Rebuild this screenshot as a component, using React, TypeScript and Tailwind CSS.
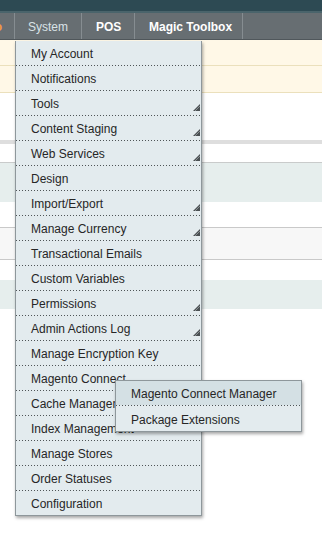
import React from "react"

const items = [
  { label: "My Account" },
  { label: "Notifications" },
  { label: "Tools", sub: true },
  { label: "Content Staging", sub: true },
  { label: "Web Services", sub: true },
  { label: "Design" },
  { label: "Import/Export", sub: true },
  { label: "Manage Currency", sub: true },
  { label: "Transactional Emails" },
  { label: "Custom Variables" },
  { label: "Permissions", sub: true },
  { label: "Admin Actions Log", sub: true },
  { label: "Manage Encryption Key" },
  { label: "Magento Connect" },
  { label: "Cache Management" },
  { label: "Index Management" },
  { label: "Manage Stores" },
  { label: "Order Statuses" },
  { label: "Configuration" },
]

function Dots() {
  return (
    <div className="h-px w-full bg-[repeating-linear-gradient(to_right,#4f5557_0,#4f5557_1px,transparent_1px,transparent_3px)]" />
  )
}

function Arrow() {
  return (
    <svg className="absolute right-[1px] bottom-[4px]" width="7" height="7" viewBox="0 0 7 7">
      <polygon points="7,0 7,7 0,7" fill="#4a4f52" />
      <line x1="2" y1="7" x2="7" y2="2" stroke="#9aa2a5" strokeWidth="0.8" />
    </svg>
  )
}

function MenuItem({ label, sub, last }: { label: string; sub?: boolean; last?: boolean }) {
  return (
    <div>
      <div className="relative h-[24px] flex items-center pl-[15px] pt-[2px] text-[12px] text-[#262626] whitespace-nowrap">
        {label}
        {sub && <Arrow />}
      </div>
      {!last && <Dots />}
    </div>
  )
}

export default function App() {
  return (
    <div className="relative w-[322px] h-[549px] overflow-hidden bg-white font-['Liberation_Sans',Arial,sans-serif]">
      {/* header */}
      <div className="h-[11px] bg-[#2d4a53]" />
      <div className="h-[2px] bg-[#4a646b]" />
      <div className="h-[27px] bg-[#676e72] flex text-[12px] border-b border-[#50575b]">
        <div className="w-[15px] overflow-hidden flex justify-end items-center pt-[2px] pr-[12px] border-r border-[#868d91]">
          <span className="font-bold text-[#f29a3c] whitespace-nowrap">Promo</span>
        </div>
        <div className="w-[67px] flex items-center pt-[2px] pl-[13px] text-[#d9e2e6] border-r border-[#868d91]">System</div>
        <div className="w-[53px] flex items-center pt-[2px] pl-[14px] font-bold text-white border-r border-[#868d91]">POS</div>
        <div className="w-[108px] flex items-center pt-[2px] pl-[14px] font-bold text-white border-r border-[#868d91] whitespace-nowrap">Magic Toolbox</div>
      </div>

      {/* page background rows */}
      <div className="flex flex-col">
        <div className="h-[26px] bg-[#fff8e7] border-b border-[#ebe0bc]" />
        <div className="h-[27px] bg-[#fff8e7] border-b border-[#ebe0bc]" />
        <div className="h-[47px] bg-white" />
        <div className="h-[4px] bg-[#dedede]" />
        <div className="h-[18px] bg-white" />
        <div className="h-[40px] bg-[#e6eeed] border-t border-[#c9cbcb]" />
        <div className="h-[25px] bg-white" />
        <div className="h-[33px] bg-[#f7f7f7] border-y border-[#c9c9c9]" />
        <div className="h-[20px] bg-white" />
        <div className="h-[29px] bg-[#e6eeed]" />
      </div>

      {/* dropdown */}
      <div className="absolute left-[15px] top-[41px] w-[187px] bg-[#e3ebee] border-x border-b border-[#8e979b] shadow-[1px_2px_3px_rgba(0,0,0,0.35)]">
        {items.map((it, i) => (
          <MenuItem key={it.label} label={it.label} sub={it.sub} last={i === items.length - 1} />
        ))}
      </div>

      {/* submenu */}
      <div className="absolute left-[115px] top-[380px] w-[187px] bg-[#e3ebee] border border-[#8e979b] shadow-[1px_2px_3px_rgba(0,0,0,0.35)]">
        <div className="h-[24px] flex items-center pl-[15px] pt-[2px] text-[12px] text-[#262626] bg-[#d4e0e4] whitespace-nowrap">
          Magento Connect Manager
        </div>
        <Dots />
        <div className="h-[25px] flex items-center pl-[15px] pt-[2px] text-[12px] text-[#262626] whitespace-nowrap">
          Package Extensions
        </div>
      </div>
    </div>
  )
}
